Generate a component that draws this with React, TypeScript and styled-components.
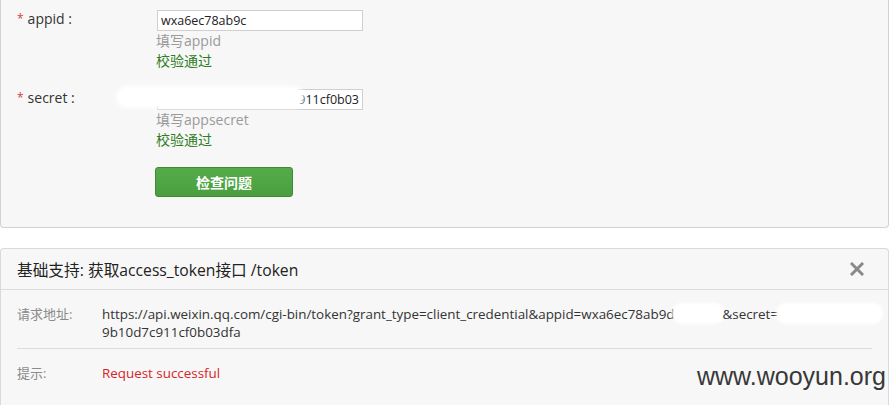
import * as React from "react";
import styled, { createGlobalStyle } from "styled-components";

const GlobalStyle = createGlobalStyle`
	body {
		margin: 0;
		background: #fff;
		font-family: "Open Sans", "Noto Sans CJK SC", sans-serif;
		color: #333;
	}
`;

const Page = styled.div`
	position: relative;
	width: 895px;
	height: 405px;
	overflow: hidden;
`;

const TopPanel = styled.div`
	width: 887px;
	background: #f7f7f7;
	border: 1px solid #d2d2d2;
	border-top: none;
	border-radius: 0 0 4px 4px;
	padding: 10px 0 30px;
	margin-bottom: 20px;
`;

const FormRow = styled.div<{ $gap?: number }>`
	display: grid;
	grid-template-columns: 156px 220px;
	margin-top: ${(p) => p.$gap || 0}px;
`;

const Label = styled.label`
	padding-left: 16px;
	font-size: 14px;
	line-height: 17px;
	color: #333;
`;

const Star = styled.span`
	color: #d43c3c;
	font-size: 12px;
	margin-right: 4px;
	vertical-align: top;
`;

const Input = styled.input<{ $right?: boolean }>`
	display: block;
	box-sizing: border-box;
	width: 206px;
	height: 21px;
	border: 1px solid #cfcfcf;
	background: #fff;
	padding: 0 3px;
	font-family: "Open Sans", sans-serif;
	font-size: 12.5px;
	color: #222;
	outline: none;
	text-align: ${(p) => (p.$right ? "right" : "left")};
`;

const Hint = styled.div<{ $ok?: boolean }>`
	font-size: 14px;
	line-height: 20px;
	margin-left: -1px;
	color: ${(p) => (p.$ok ? "#2f7d1f" : "#9a9a9a")};
`;

const Button = styled.button`
	display: block;
	margin: 17px 0 0 154px;
	width: 138px;
	height: 30px;
	border: 1px solid #3f8a35;
	border-radius: 3px;
	background: linear-gradient(#55ab4a, #4a9e3f);
	color: #fff;
	font-family: "Noto Sans CJK SC", sans-serif;
	font-size: 14px;
	font-weight: bold;
`;

const Panel = styled.div`
	width: 887px;
	height: 170px;
	background: #f7f7f7;
	border: 1px solid #d9d9d9;
	border-bottom: none;
	border-radius: 4px 4px 0 0;
`;

const PanelHead = styled.div`
	display: flex;
	align-items: center;
	justify-content: space-between;
	height: 40px;
	padding: 0 24px 0 16px;
	border-bottom: 1px solid #dcdcdc;
	font-size: 15.7px;
	color: #222;
`;

const PanelBody = styled.div`
	padding: 0 16px;
`;

const InfoRow = styled.div<{ $line?: boolean }>`
	display: grid;
	grid-template-columns: 85px 1fr;
	padding: 15px 0 ${(p) => (p.$line ? 7 : 0)}px;
	font-size: 13.4px;
	line-height: 18px;
	border-bottom: ${(p) => (p.$line ? "1px solid #dcdcdc" : "none")};
`;

const InfoLabel = styled.div`
	color: #8a8a8a;
	font-size: 13px;
`;

const InfoValue = styled.div<{ $error?: boolean }>`
	color: ${(p) => (p.$error ? "#d8232a" : "#333")};
	min-width: 0;
`;

const Line = styled.div`
	white-space: nowrap;
`;

const Redact = styled.span<{ $pad?: number }>`
	display: inline-block;
	height: 17px;
	vertical-align: top;
	background: #fff;
	color: transparent;
	border-radius: 8px;
	box-shadow: 0 0 3px 2px #fff;
	padding-right: ${(p) => p.$pad || 0}px;
`;

const Blob = styled.div`
	position: absolute;
	left: 118px;
	top: 88px;
	width: 184px;
	height: 18px;
	background: #fff;
	border-radius: 9px;
	box-shadow: 0 0 4px 2px #fff;
`;

const Watermark = styled.div`
	position: absolute;
	right: 9px;
	bottom: 14px;
	font-family: "Liberation Sans", Arial, sans-serif;
	font-size: 25px;
	color: #383838;
`;

const CloseIcon = () => (
	<svg width="14" height="14" viewBox="0 0 14 14">
		<path d="M2 2 L12 12 M12 2 L2 12" stroke="#8a8a8a" strokeWidth="3" strokeLinecap="square" />
	</svg>
);

const App = () => {
	return (
		<Page>
			<GlobalStyle />
			<TopPanel>
				<FormRow>
					<Label>
						<Star>*</Star>appid :
					</Label>
					<div>
						<Input readOnly value="wxa6ec78ab9c" />
						<Hint>填写appid</Hint>
						<Hint $ok>校验通过</Hint>
					</div>
				</FormRow>
				<FormRow $gap={18}>
					<Label>
						<Star>*</Star>secret :
					</Label>
					<div>
						<Input readOnly $right value="9b10d7c911cf0b03" />
						<Hint>填写appsecret</Hint>
						<Hint $ok>校验通过</Hint>
					</div>
				</FormRow>
				<Button type="button">检查问题</Button>
			</TopPanel>
			<Blob />
			<Panel>
				<PanelHead>
					<span>基础支持: 获取access_token接口 /token</span>
					<CloseIcon />
				</PanelHead>
				<PanelBody>
					<InfoRow $line>
						<InfoLabel>请求地址:</InfoLabel>
						<InfoValue>
							<Line>
								https://api.weixin.qq.com/cgi-bin/token?grant_type=client_credential&amp;appid=wxa6ec78ab9d
								<Redact $pad={6}>xxxxxx</Redact>&amp;secret=<Redact $pad={12}>xxxxxxxxxxxxx</Redact>
							</Line>
							<Line>9b10d7c911cf0b03dfa</Line>
						</InfoValue>
					</InfoRow>
					<InfoRow>
						<InfoLabel>提示:</InfoLabel>
						<InfoValue $error>Request successful</InfoValue>
					</InfoRow>
				</PanelBody>
			</Panel>
			<Watermark>www.wooyun.org</Watermark>
		</Page>
	);
};

export default App;
